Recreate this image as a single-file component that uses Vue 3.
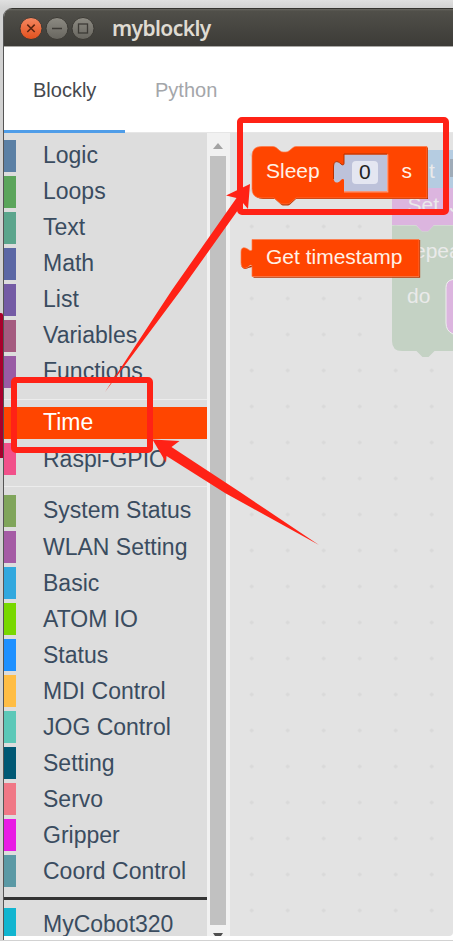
<script setup>
const group1 = [
  { name: 'Logic', color: '#5b80a5' },
  { name: 'Loops', color: '#5ba55b' },
  { name: 'Text', color: '#5ba58c' },
  { name: 'Math', color: '#5b67a5' },
  { name: 'List', color: '#745ba5' },
  { name: 'Variables', color: '#a55b80' },
  { name: 'Functions', color: '#995ba5' },
]
const group2 = [
  { name: 'Time', color: '#ff4500', selected: true },
  { name: 'Raspi-GPIO', color: '#f1508a', low: true },
]
const group3 = [
  { name: 'System Status', color: '#80a55b' },
  { name: 'WLAN Setting', color: '#a55ba5', low: true },
  { name: 'Basic', color: '#32a8de', low: true },
  { name: 'ATOM IO', color: '#78d800', low: true },
  { name: 'Status', color: '#1e90ff', low: true },
  { name: 'MDI Control', color: '#ffbd44', low: true },
  { name: 'JOG Control', color: '#5cc8b8', low: true },
  { name: 'Setting', color: '#005874', low: true },
  { name: 'Servo', color: '#f07886', low: true },
  { name: 'Gripper', color: '#e81ae4', low: true },
  { name: 'Coord Control', color: '#5b99a5', low: true },
]
const group4 = [{ name: 'MyCobot320', color: '#12b5d0', low: true }]
const groups = [
  { items: group1 },
  { items: group2, sep: 'light' },
  { items: group3, sep: 'light wide' },
  { items: group4, sep: 'dark' },
]
</script>

<template>
  <div class="desktop">
    <div class="behind"></div>
    <div class="window">
      <header class="titlebar">
        <svg class="controls" width="82" height="26" viewBox="0 0 82 26">
          <defs>
            <linearGradient id="close" x1="0" y1="0" x2="0" y2="1">
              <stop offset="0" stop-color="#f58862" />
              <stop offset="1" stop-color="#e2501c" />
            </linearGradient>
            <linearGradient id="ctl" x1="0" y1="0" x2="0" y2="1">
              <stop offset="0" stop-color="#8d8b83" />
              <stop offset="1" stop-color="#67655e" />
            </linearGradient>
          </defs>
          <circle cx="14" cy="12.500" r="11" fill="url(#close)" stroke="#3a3833" stroke-width="1" />
          <circle cx="40" cy="12.500" r="11" fill="url(#ctl)" stroke="#3a3833" stroke-width="1" />
          <circle cx="66" cy="12.500" r="11" fill="url(#ctl)" stroke="#3a3833" stroke-width="1" />
          <path d="M10.300 8.600l7.400 7.400M17.700 8.600l-7.400 7.400" stroke="#5a2410" stroke-width="1.500" />
          <path d="M35 12.500h10" stroke="#3d3b36" stroke-width="1.300" />
          <rect x="61.500" y="8" width="9" height="9" fill="none" stroke="#3d3b36" stroke-width="1.300" />
        </svg>
        <h1 class="title">myblockly</h1>
      </header>
      <nav class="tabs">
        <div class="tab active">Blockly</div>
        <div class="tab">Python</div>
      </nav>
      <main class="content">
        <aside class="toolbox">
          <template v-for="(g, i) in groups" :key="i">
            <div v-if="g.sep" class="sep" :class="g.sep"></div>
            <div
              v-for="c in g.items"
              :key="c.name"
              class="row"
              :class="{ selected: c.selected, low: c.low }"
              :style="{ '--c': c.color }"
            >{{ c.name }}</div>
          </template>
        </aside>
        <div class="scroller">
          <i class="up"></i>
          <div class="thumb"></div>
          <i class="down"></i>
        </div>
        <section class="workspace">
          <svg width="223" height="803" viewBox="230 133 223 803">
            <defs>
              <pattern id="grid" x="233.700" y="136.500" width="36" height="36" patternUnits="userSpaceOnUse">
                <path d="M16.200 18h3.600M18 16.200v3.600" stroke="#d9d9d9" stroke-width="1.800" />
              </pattern>
            </defs>
            <rect x="230" y="133" width="223" height="803" fill="url(#grid)" />
            <g class="faded">
              <path d="M392 158q0-8 8-8H453V189H392z" fill="#b5cce1" />
              <path d="M392 188H453V225H434l-6 6.500h-6l-6-6.500H392z" fill="#dcb5df" />
              <path d="M392 225.500H416l6 6h6l6-6H453V351H434.500l-6 6h-6l-6-6H402q-10 0-10-10z" fill="#c4d2c4" />
              <path d="M453 279.500q-7 1-7 8V323q0 8 7 11" fill="#dcb5df" stroke="#eeeeee" stroke-width="1" />
              <rect x="450" y="159" width="4" height="18" fill="#9fabb8" />
              <text x="429" y="177.500">t</text>
              <text x="407.500" y="211.500">Set</text>
              <text x="449.500" y="211.500">J</text>
              <text x="407" y="257.500">repeat</text>
              <text x="407" y="302.500">do</text>
            </g>
            <g class="block">
              <path d="M253.500 156q0-8 8.500-8.500h14l6 5.500h6l6-5.500h134V199H296l-6 5.500q-1 1-2 1h-5q-1 0-2-1l-6-5.500H263q-9 0-9.500-9z" fill="#b53200" />
              <path d="M252 156q0-9.500 9.500-9.500H273q2 0 3.500 1.500l3 2.500q2 1.500 3.500 1.500h3q1.500 0 3.500-1.500l3-2.500q1.500-1.500 3.500-1.500H427V198H296l-6 5q-1.500 1-3 1h-4q-1.500 0-3-1l-6-5H261.500q-9.500 0-9.500-9.500z" fill="#ff4500" stroke="#ff7846" stroke-width="0.7" />
              <path d="M344 154.500H387.500V191.500H344V180.500c0-1.500-1.500-2-3-.5-4 4.500-7.500 3-7.500-3V167c0-6 3.500-7 7.500-3 1.500 1.500 3 1 3-.5z" fill="#bdc2da" />
              <path d="M344 191.800H387.700V154.500" fill="none" stroke="#ff9b78" stroke-width="1.300" />
              <path d="M333.500 179V167c0-6 3.500-7 7.500-3 1.500 1.500 3 1 3-.5V154H387" fill="none" stroke="#b53200" stroke-width="1" />
              <rect x="352" y="161" width="26" height="23" rx="4" fill="#e4e6f1" />
              <text x="266" y="177.500">Sleep</text>
              <text x="359" y="178.500" class="num">0</text>
              <text x="401.500" y="177.500">s</text>
            </g>
            <g class="block">
              <path d="M253.500 277.200H419.500V240M242 266q2 4 7 1l4-1" fill="none" stroke="#b53200" stroke-width="1.300" />
              <path d="M252 239.500H419V276.500H252V266.500c0-1.500-1.500-2-3-.5-4 4-8 2.500-8-3.500V252c0-5 3.500-5.500 8-2 1.500 1.200 3 .5 3-.5z" fill="#ff4500" stroke="#ff7846" stroke-width="0.7" />
              <text x="266" y="263.500">Get timestamp</text>
            </g>
          </svg>
        </section>
      </main>
    </div>
    <svg class="marks" width="453" height="941" viewBox="0 0 453 941">
      <g fill="none" stroke="#ff2216" stroke-width="6">
        <rect x="240" y="120" width="206" height="92" rx="2" />
        <rect x="14" y="380" width="136" height="70" rx="2" />
      </g>
      <path d="M250 184L226 195.500L236.500 198L172 290L105 392L181 290L243 203L248 209z" fill="#ff2216" />
      <path d="M152.500 439.500L179.500 441L171.500 447L240 492L319 545L225 493L166.500 456L166 462.500z" fill="#ff2216" />
    </svg>
  </div>
</template>

<style>
body {
  margin: 0;
  overflow: hidden;
}
</style>

<style scoped>
.desktop {
  position: relative;
  box-sizing: border-box;
  width: 453px;
  height: 941px;
  padding: 8px 0 0 3px;
  overflow: hidden;
  background: linear-gradient(#e0e0e0, #d2d2d2 8px, #d2d2d2);
  font-family: "Liberation Sans", Arial, sans-serif;
}
.behind {
  position: absolute;
  left: 0;
  top: 313px;
  width: 3px;
  height: 145px;
  background: #a9002c;
  border-radius: 0 2px 0 0;
}
.window {
  box-sizing: border-box;
  height: 932px;
  border-left: 1px solid #555;
  border-radius: 9px 0 0 0;
  background: #fff;
  overflow: hidden;
}
.titlebar {
  display: flex;
  align-items: center;
  box-sizing: border-box;
  height: 39px;
  padding: 2px 0 0 13px;
  border-top: 1px solid #34332f;
  border-bottom: 1px solid #aaa9a6;
  background: linear-gradient(#6a6963 0, #504f49 2px, #3c3b37 100%);
}
.title {
  margin: -2px 0 0 13px;
  font: 600 21px/30px "Noto Sans", sans-serif;
  letter-spacing: -0.6px;
  color: #dfdbd2;
}
.tabs {
  display: flex;
  height: 86px;
  box-sizing: border-box;
  border-bottom: 1px solid #e6e6e6;
}
.tab {
  box-sizing: border-box;
  width: 121px;
  height: 86px;
  padding-left: 30px;
  font-size: 20px;
  line-height: 86px;
  color: #a4a6aa;
}
.tab.active {
  padding-left: 29px;
  border-bottom: 3px solid #4f9de8;
  color: #45484e;
}
.content {
  display: flex;
  height: 803px;
}
.toolbox {
  box-sizing: border-box;
  width: 203px;
  padding-top: 7px;
  overflow: hidden;
  background: #ddd;
}
.row {
  box-sizing: border-box;
  height: 32px;
  margin-bottom: 4px;
  padding-left: 27px;
  border-left: 12px solid var(--c);
  font-size: 23px;
  line-height: 31px;
  color: #3a4c60;
  white-space: nowrap;
}
.row.low {
  line-height: 33px;
}
.row.selected {
  background: var(--c);
  color: #fff;
}
.sep {
  height: 1px;
  margin: 11px 0 7px;
  background: #ececec;
}
.sep.wide {
  margin-bottom: 8px;
}
.sep.dark {
  height: 3px;
  margin: 10px 0 8px;
  background: #333;
}
.scroller {
  display: flex;
  flex-direction: column;
  align-items: center;
  box-sizing: border-box;
  width: 23px;
  padding-right: 1px;
  background: #f1f1f1;
}
.up {
  margin-top: 10px;
  border: 5px solid transparent;
  border-top: 0;
  border-bottom: 6px solid #a3a3a3;
}
.thumb {
  width: 16px;
  height: 769px;
  margin-top: 7px;
  background: #c1c1c1;
}
.down {
  width: 6px;
  margin-top: 8px;
  border: 2px solid transparent;
  border-bottom: 0;
  border-top: 3px solid #505050;
}
.workspace {
  flex: 1;
  height: 803px;
  background: #e3e3e3;
  border-radius: 0 0 4px 0;
  overflow: hidden;
}
.workspace svg {
  display: block;
}
.block text,
.faded text {
  font-size: 21px;
  fill: #fff1e6;
}
.faded text {
  fill: #eaeaea;
}
.block .num {
  fill: #222;
}
.marks {
  position: absolute;
  left: 0;
  top: 0;
}
</style>
